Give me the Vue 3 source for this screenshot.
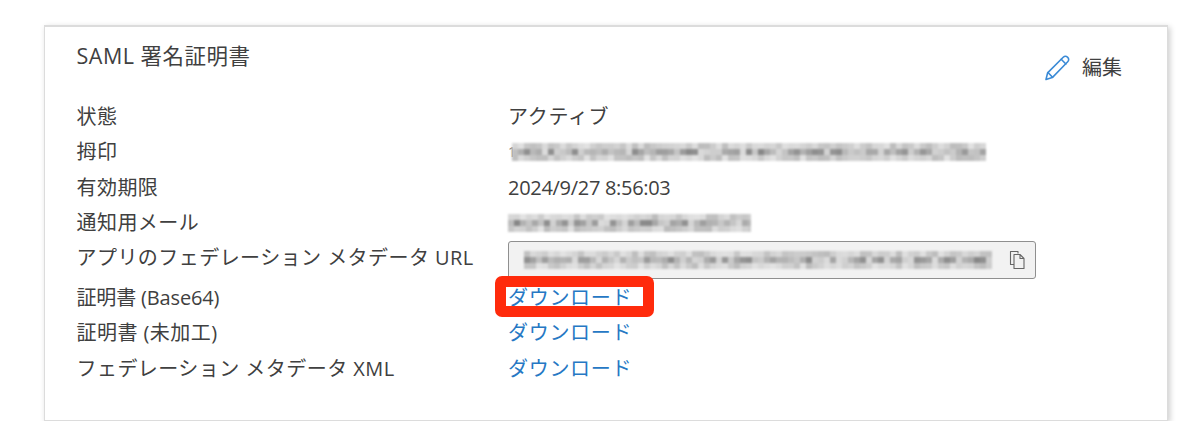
<script setup>
const tones = (seed, cols, rows) => {
  let s = seed
  const out = []
  for (let r = 0; r < rows; r++) {
    const mid = r === 1
    for (let c = 0; c < cols; c++) {
      s = (s * 9301 + 49297) % 233280
      const span = mid ? 85 : 40
      const g = (mid ? 135 : 188) + Math.floor((s / 233280) * span)
      out.push(`rgb(${g},${g},${g})`)
    }
  }
  return out
}
const rows = [
  { label: '状態', text: 'アクティブ', valueCls: 'kana' },
  { label: '拇印', mosaic: tones(11, 79, 3), cols: 79, cls: 'thumb', prefix: '1' },
  { label: '有効期限', text: '2024/9/27 8:56:03', valueCls: 'latin' },
  { label: '通知用メール', mosaic: tones(37, 41, 3), cols: 41, cls: 'mail' },
  { label: 'アプリのフェデレーション メタデータ URL', input: tones(73, 78, 3) },
  { label: '証明書 (Base64)', labelCls: 'tight', link: true, mark: true },
  { label: '証明書 (未加工)', link: true },
  { label: 'フェデレーション メタデータ XML', link: true },
]
</script>

<template>
  <div class="page">
    <section class="card">
      <header class="head">
        <h2 class="title">SAML 署名証明書</h2>
        <button class="edit" type="button">
          <svg width="27" height="26" viewBox="0 0 26 26" fill="none" stroke="#3a8ad6" stroke-width="1.6" stroke-linejoin="round" stroke-linecap="round">
            <path d="M1.500 24.500l1.600-6.600L18.700 2.300c1.200-1.200 3.200-1.200 4.500 0s1.300 3.200 0 4.500L7.800 22.600z" />
            <path d="M3.500 17.500l4.500 4.700M16.700 4.300l4.700 4.700" />
          </svg>
          <span>編集</span>
        </button>
      </header>
      <div class="rows">
        <div v-for="r in rows" :key="r.label" class="row">
          <div class="label" :class="r.labelCls">{{ r.label }}</div>
          <div class="value">
            <span v-if="r.text" :class="r.valueCls">{{ r.text }}</span>
            <div v-else-if="r.mosaic" class="mos-wrap">
              <span v-if="r.prefix" class="prefix">{{ r.prefix }}</span>
              <div class="mosaic" :class="r.cls" :style="{ gridTemplateColumns: `repeat(${r.cols}, 6px)` }">
                <i v-for="(c, i) in r.mosaic" :key="i" :style="{ background: c }"></i>
              </div>
            </div>
            <div v-else-if="r.input" class="input">
              <div class="mosaic urlm" :style="{ gridTemplateColumns: 'repeat(78, 6px)' }">
                <i v-for="(c, i) in r.input" :key="i" :style="{ background: c }"></i>
              </div>
              <svg class="copy" width="18" height="20" viewBox="0 0 18 20" fill="none" stroke="#666" stroke-width="1.100" stroke-linejoin="round">
                <path d="M10 3.500V1.500H2.500v13H6" />
                <path d="M6 4.500h6l4 4v10H6zM12 4.500v4h4" />
              </svg>
            </div>
            <a v-else-if="r.link" class="link" href="#">ダウンロード</a>
            <span v-if="r.mark" class="mark"></span>
          </div>
        </div>
      </div>
    </section>
  </div>
</template>

<style>
body { background: #fff; }
</style>

<style scoped>
.page {
  padding: 25px 32px 0 44px;
  font-family: "Open Sans", "Noto Sans CJK JP", sans-serif;
  color: #404040;
  font-size: 20px;
}
.card {
  box-sizing: border-box;
  height: 396px;
  padding: 14px 45px 0 31.500px;
  background: #fff;
  border: 1px solid #dcdcdc;
  border-top-width: 2px;
  box-shadow: 2px 2px 6px rgba(0, 0, 0, 0.2);
}
.head {
  display: flex;
  justify-content: space-between;
  align-items: flex-start;
  height: 58px;
}
.title {
  margin: 0;
  font-size: 21.500px;
  font-weight: 400;
  line-height: 30px;
  letter-spacing: 0.500px;
}
.edit {
  display: flex;
  align-items: center;
  gap: 11px;
  margin-top: 12px;
  padding: 0;
  border: 0;
  background: none;
  color: inherit;
  font: inherit;
  line-height: 30px;
}
.row {
  display: grid;
  grid-template-columns: 431.500px 1fr;
  min-height: 35.300px;
  line-height: 35.300px;
}
.label {
  white-space: nowrap;
  letter-spacing: 0.450px;
}
.label.tight { letter-spacing: -0.150px; }
.kana { letter-spacing: 0.700px; }
.latin { letter-spacing: -0.300px; }
.value { position: relative; }
.mos-wrap {
  display: flex;
  align-items: center;
  height: 35.300px;
}
.prefix {
  width: 4px;
  font-size: 14px;
  color: #777;
}
.mosaic {
  display: grid;
  grid-auto-rows: 6px;
  filter: blur(0.800px);
  overflow: hidden;
}
.mosaic i { display: block; }
.thumb { width: 474px; }
.mail { width: 243px; margin-left: 0; }
.input {
  box-sizing: border-box;
  display: flex;
  align-items: center;
  justify-content: space-between;
  width: 528px;
  height: 38px;
  margin: 1px 0 1px;
  padding: 0 9px 0 15px;
  background: #f2f2f2;
  border: 1px solid #8f8f8f;
  border-radius: 3px;
}
.urlm { width: 468px; }
.copy { flex: none; }
.link {
  color: #2678c4;
  text-decoration: none;
  letter-spacing: 0.700px;
}
.mark {
  position: absolute;
  left: -13px;
  top: -4px;
  box-sizing: border-box;
  width: 159px;
  height: 41px;
  border: 11px solid #ff2b0c;
  border-radius: 7px;
}
</style>
